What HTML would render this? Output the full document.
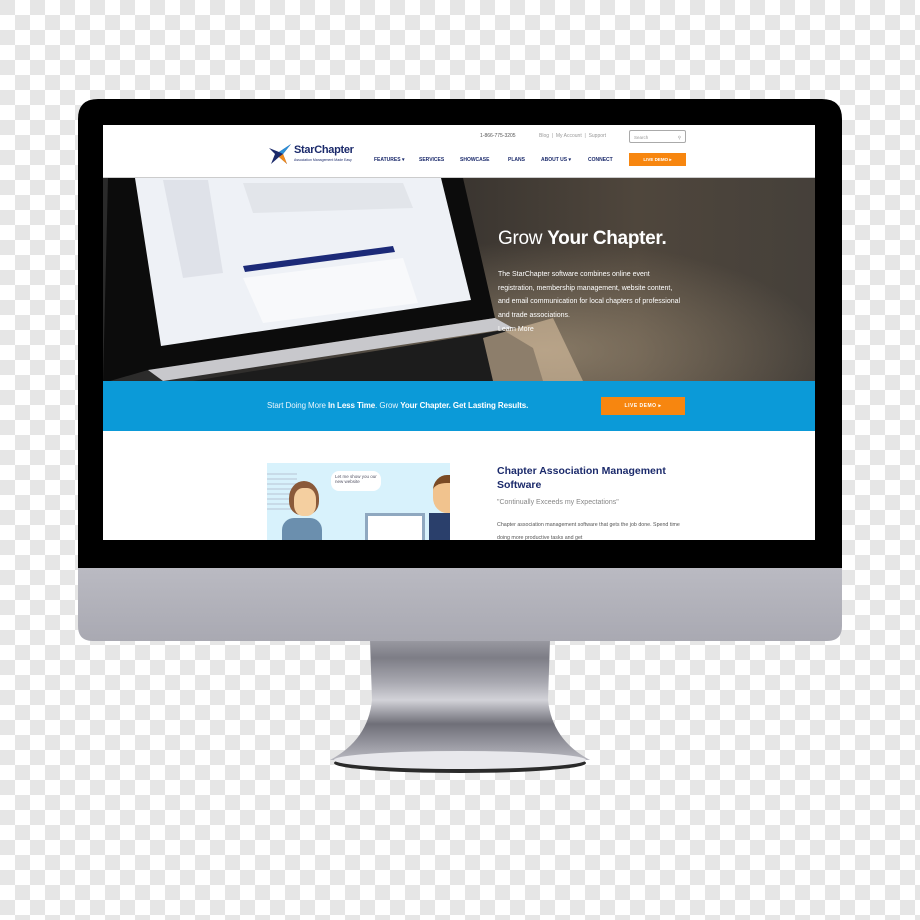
<!DOCTYPE html>
<html><head><meta charset="utf-8"><style>
*{margin:0;padding:0;box-sizing:border-box}
body{width:920px;height:920px;position:relative;overflow:hidden;font-family:"Liberation Sans",sans-serif;
background-color:#fff;background-image:linear-gradient(45deg,#e6e6e6 25%,transparent 25%,transparent 75%,#e6e6e6 75%),linear-gradient(45deg,#e6e6e6 25%,transparent 25%,transparent 75%,#e6e6e6 75%);background-size:30px 30px;background-position:15px 0,0 15px}
.a{position:absolute}
</style></head><body>
<svg class="a" style="left:0;top:0" width="920" height="920">
<defs>
<linearGradient id="st" x1="0" y1="0" x2="0" y2="1">
<stop offset="0" stop-color="#9a9aa2"/><stop offset="0.15" stop-color="#7d7d86"/><stop offset="0.35" stop-color="#a8a8b0"/><stop offset="0.5" stop-color="#d2d2d8"/><stop offset="0.7" stop-color="#6f6f78"/><stop offset="1" stop-color="#b8b8c0"/></linearGradient>
<linearGradient id="ch" x1="0" y1="0" x2="0" y2="1"><stop offset="0" stop-color="#babac2"/><stop offset="1" stop-color="#a9a9b2"/></linearGradient>
</defs>
<path d="M370 640 L550 640 L548 700 Q552 740 590 760 L330 760 Q368 740 372 700 Z" fill="url(#st)"/>
<ellipse cx="460" cy="763" rx="126" ry="10" fill="#2a2a2a"/>
<ellipse cx="460" cy="760" rx="126" ry="9" fill="#e8e8ec"/>
<path d="M78 568 L842 568 L842 626 Q842 641 827 641 L93 641 Q78 641 78 626 Z" fill="url(#ch)"/>
<path d="M98 99 L822 99 Q842 99 842 119 L842 568 L78 568 L78 119 Q78 99 98 99 Z" fill="#000"/>
</svg>
<div class="a" style="left:103px;top:125px;width:712px;height:415px;background:#fff;overflow:hidden">
 <!-- hero -->
 <div class="a" style="left:0;top:53px;width:712px;height:203px;overflow:hidden;background:linear-gradient(90deg,#2a2a2a 0%,#3a3530 50%,#4f463c 75%,#45403a 100%)">
  <div class="a" style="left:0;top:0;width:712px;height:203px;background:radial-gradient(ellipse at 62% 85%,rgba(190,170,140,.55),transparent 45%)"></div>
  <svg class="a" style="left:0;top:0" width="712" height="203">
   <polygon points="5,0 360,0 392,140 45,192 0,205" fill="#0c0c0c"/>
   <polygon points="32,0 338,0 368,122 58,168" fill="#eef1f6"/>
   <polygon points="60,2 105,2 120,95 80,100" fill="#dfe2e9"/>
   <polygon points="140,5 300,5 310,30 150,35" fill="#e2e5ea"/>
   <polygon points="140,88 290,68 292,74 142,94" fill="#1c2a78"/>
   <polygon points="140,100 300,80 315,125 160,145" fill="#f8f9fb"/>
   <polygon points="45,192 392,140 410,150 60,203" fill="#c8c8cc"/>
   <polygon points="90,203 400,152 430,170 440,203" fill="#1c1c1c"/>
   <polygon points="380,160 450,140 480,203 390,203" fill="#d8c0a0" opacity=".6"/>
  </svg>
  <div class="a" style="left:395px;top:50px;font-size:19px;color:#fff;letter-spacing:-.3px">Grow <b>Your Chapter.</b></div>
  <div class="a" style="left:395px;top:90px;width:185px;font-size:7px;line-height:13.7px;color:#fff">The StarChapter software combines online event registration, membership management, website content, and email communication for local chapters of professional and trade associations.<br>Learn More</div>
 </div>
 <!-- header -->
 <div class="a" style="left:0;top:0;width:712px;height:53px;background:#fff;border-bottom:1px solid #ccc"></div>
 <svg class="a" style="left:164px;top:17px" width="28" height="24"><polygon points="2,6 12,10 24,2 16,12 20,22 12,15 4,22 8,12" fill="#1b2a6b"/><polygon points="12,10 24,2 16,12" fill="#2c8fd6"/><polygon points="12,15 20,22 16,12" fill="#f08a1c"/></svg>
 <div class="a" style="left:191px;top:19px;font-size:11px;font-weight:bold;color:#1b2a6b;letter-spacing:-.3px">StarChapter</div>
 <div class="a" style="left:191px;top:33px;font-size:3.5px;color:#1b2a6b">Association Management Made Easy</div>
 <div class="a" style="left:377px;top:8px;font-size:5px;color:#555">1-866-775-3205</div>
 <div class="a" style="left:436px;top:8px;font-size:5px;color:#999">Blog &nbsp;|&nbsp; My Account &nbsp;|&nbsp; Support</div>
 <div class="a" style="left:526px;top:5px;width:57px;height:13px;border:1px solid #aaa;border-radius:2px;font-size:4.5px;color:#999;padding:4px 0 0 4px">Search<span style="float:right;margin-right:4px">&#9906;</span></div>
 <div class="a" style="left:271px;top:32px;font-size:5px;font-weight:bold;color:#1b2a6b;white-space:nowrap"><span class="a" style="left:0">FEATURES ▾</span><span class="a" style="left:45px">SERVICES</span><span class="a" style="left:86px">SHOWCASE</span><span class="a" style="left:134px">PLANS</span><span class="a" style="left:167px">ABOUT US ▾</span><span class="a" style="left:214px">CONNECT</span></div>
 <div class="a" style="left:526px;top:28px;width:57px;height:13px;background:#f7860f;color:#fff;font-size:4.5px;font-weight:bold;text-align:center;padding-top:4px">LIVE DEMO ▸</div>
 <!-- band -->
 <div class="a" style="left:0;top:256px;width:712px;height:50px;background:#0b9ad8"></div>
 <div class="a" style="left:164px;top:276px;font-size:8px;color:#e8f4fb;letter-spacing:-.1px">Start Doing More <b style="color:#fff">In Less Time</b>. Grow <b style="color:#fff">Your Chapter. Get Lasting Results.</b></div>
 <div class="a" style="left:498px;top:272px;width:84px;height:18px;background:#f7860f;color:#fff;font-size:5px;font-weight:bold;text-align:center;padding-top:6px;letter-spacing:.5px">LIVE DEMO ▸</div>
 <!-- content -->
 <div class="a" style="left:164px;top:338px;width:183px;height:80px;background:#d8f2fc;overflow:hidden">
  <div class="a" style="left:0;top:10px;width:30px;height:40px;background:repeating-linear-gradient(#c8dbe8 0 2px,transparent 2px 5px)"></div>
  <div class="a" style="left:64px;top:8px;width:50px;height:20px;background:#fff;border-radius:8px;font-size:4.5px;color:#556;padding:3px 4px">Let me show you our new website</div>
  <div class="a" style="left:22px;top:18px;width:30px;height:34px;background:#8a5a3a;border-radius:50% 50% 40% 40%"></div>
  <div class="a" style="left:27px;top:25px;width:22px;height:28px;background:#f4cfa0;border-radius:40%"></div>
  <div class="a" style="left:15px;top:55px;width:40px;height:30px;background:#6b8fae;border-radius:12px 12px 0 0"></div>
  <div class="a" style="left:98px;top:50px;width:60px;height:35px;background:#fff;border:3px solid #8fa8c0"></div>
  <div class="a" style="left:166px;top:12px;width:35px;height:38px;background:#f1c38e;border-radius:40%;border-top:8px solid #7a4a24"></div>
  <div class="a" style="left:162px;top:50px;width:42px;height:35px;background:#2a3f6b"></div>
 </div>
 <div class="a" style="left:394px;top:339px;font-size:10.5px;line-height:14px;font-weight:bold;color:#1b2a6b;width:200px">Chapter Association Management Software</div>
 <div class="a" style="left:394px;top:374px;font-size:7px;color:#888">"Continually Exceeds my Expectations"</div>
 <div class="a" style="left:394px;top:394px;width:190px;font-size:5.3px;line-height:12.5px;color:#555">Chapter association management software that gets the job done. Spend time doing more productive tasks and get</div>
</div>
</body></html>
